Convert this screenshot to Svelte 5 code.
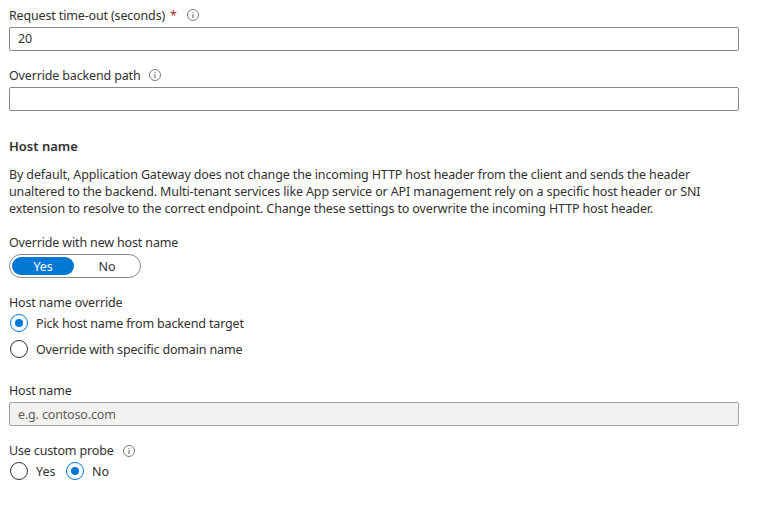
<script>
  let timeout = $state('20');
  let path = $state('');
  let override = $state(true);
  let source = $state('backend');
  let probe = $state('no');
</script>

{#snippet info()}
  <svg class="info" width="12" height="12" viewBox="0 0 12 12" aria-hidden="true">
    <circle cx="6" cy="6" r="5.5" fill="none" stroke="#6f6e6d" stroke-width="0.9" />
    <rect x="5.5" y="5" width="1" height="4" fill="#605e5c" />
    <rect x="5.5" y="3" width="1" height="1" fill="#605e5c" />
  </svg>
{/snippet}

{#snippet radio(checked, label, pick)}
  <button class="radio" role="radio" aria-checked={checked} onclick={pick}>
    <span class="ring" class:checked></span>
    <span class="caption">{label}</span>
  </button>
{/snippet}

<main>
  <section class="field">
    <div class="label"><span>Request time-out (seconds)</span><span class="required">*</span>{@render info()}</div>
    <input aria-label="Request time-out" bind:value={timeout} />
  </section>

  <section class="field">
    <div class="label"><span>Override backend path</span>{@render info()}</div>
    <input aria-label="Override backend path" bind:value={path} />
  </section>

  <h2>Host name</h2>
  <p>
    <span>By default, Application Gateway does not change the incoming HTTP host header from the client and sends the header</span>
    <span>unaltered to the backend. Multi-tenant services like App service or API management rely on a specific host header or SNI</span>
    <span>extension to resolve to the correct endpoint. Change these settings to overwrite the incoming HTTP host header.</span>
  </p>

  <section class="field">
    <div class="label"><span>Override with new host name</span></div>
    <div class="toggle">
      <button class:active={override} onclick={() => (override = true)}>Yes</button>
      <button class:active={!override} onclick={() => (override = false)}>No</button>
    </div>
  </section>

  <section class="field choices">
    <div class="label"><span>Host name override</span></div>
    <div class="column" role="radiogroup">
      {@render radio(source === 'backend', 'Pick host name from backend target', () => (source = 'backend'))}
      {@render radio(source === 'domain', 'Override with specific domain name', () => (source = 'domain'))}
    </div>
  </section>

  <section class="field">
    <div class="label"><span>Host name</span></div>
    <input aria-label="Host name" placeholder="e.g. contoso.com" disabled />
  </section>

  <section class="field probe">
    <div class="label"><span>Use custom probe</span>{@render info()}</div>
    <div class="row" role="radiogroup">
      {@render radio(probe === 'yes', 'Yes', () => (probe = 'yes'))}
      {@render radio(probe === 'no', 'No', () => (probe = 'no'))}
    </div>
  </section>
</main>

<style>
  :global(body) {
    margin: 0;
    background: #fff;
  }
  main {
    box-sizing: border-box;
    width: 765px;
    height: 510px;
    padding: 6px 26px 0 9px;
    overflow: hidden;
    color: #323130;
    font: 12.5px/18px 'Segoe UI', 'Noto Sans', sans-serif;
    letter-spacing: -0.128px;
  }
  .field {
    display: flex;
    flex-direction: column;
    height: 45px;
    margin-bottom: 15px;
    letter-spacing: -0.155px;
  }
  .label {
    display: flex;
    align-items: center;
    height: 18px;
    margin-bottom: 3px;
    white-space: nowrap;
  }
  .label span,
  .caption {
    padding-top: 2px;
  }
  .label .required {
    margin-left: 5px;
    color: #a4262c;
  }
  .info {
    flex: none;
    margin-left: 9px;
  }
  .required + .info {
    margin-left: 10px;
  }
  .probe .info {
    margin-top: 2px;
  }
  input {
    box-sizing: border-box;
    width: 730px;
    height: 24px;
    padding: 0 8px 2px;
    border: 1px solid #8a8886;
    border-radius: 2px;
    outline: none;
    background: #fff;
    color: inherit;
    font: inherit;
    letter-spacing: inherit;
  }
  input:disabled {
    padding-bottom: 0;
    border-color: #a19f9d;
    background: #f3f2f1;
  }
  input::placeholder {
    color: #605e5c;
    opacity: 1;
  }
  h2 {
    height: 18px;
    margin: 26px 0 11px;
    font-size: 13px;
    font-weight: 600;
    line-height: 18px;
    letter-spacing: 0;
  }
  p {
    display: flex;
    flex-direction: column;
    align-items: flex-start;
    margin: 0 0 16px;
    line-height: 17px;
    white-space: nowrap;
  }
  button {
    padding: 0;
    border: 0;
    background: none;
    color: inherit;
    font: inherit;
    letter-spacing: inherit;
    cursor: pointer;
  }
  .toggle {
    display: flex;
    gap: 2px;
    box-sizing: border-box;
    width: 132px;
    height: 24px;
    padding: 2px;
    border: 1px solid #8a8886;
    border-radius: 12px;
  }
  .toggle button {
    flex: 0 0 62px;
    height: 18px;
    padding-top: 1px;
    border-radius: 9px;
  }
  .toggle .active {
    background: #0078d4;
    color: #fff;
  }
  .choices {
    height: 73px;
  }
  .column {
    display: flex;
    flex-direction: column;
    gap: 8px;
  }
  .row {
    display: flex;
    gap: 10px;
    letter-spacing: 0;
  }
  .radio {
    display: flex;
    align-items: center;
    height: 18px;
    padding-left: 1px;
    white-space: nowrap;
  }
  .row .radio:first-child {
    width: 46px;
  }
  .ring {
    display: flex;
    flex: none;
    align-items: center;
    justify-content: center;
    box-sizing: border-box;
    width: 18px;
    height: 18px;
    margin-right: 8px;
    border: 1px solid #323130;
    border-radius: 50%;
  }
  .ring.checked {
    border-color: #0078d4;
  }
  .ring.checked::after {
    width: 8px;
    height: 8px;
    border-radius: 50%;
    background: #0078d4;
    content: '';
  }
</style>
